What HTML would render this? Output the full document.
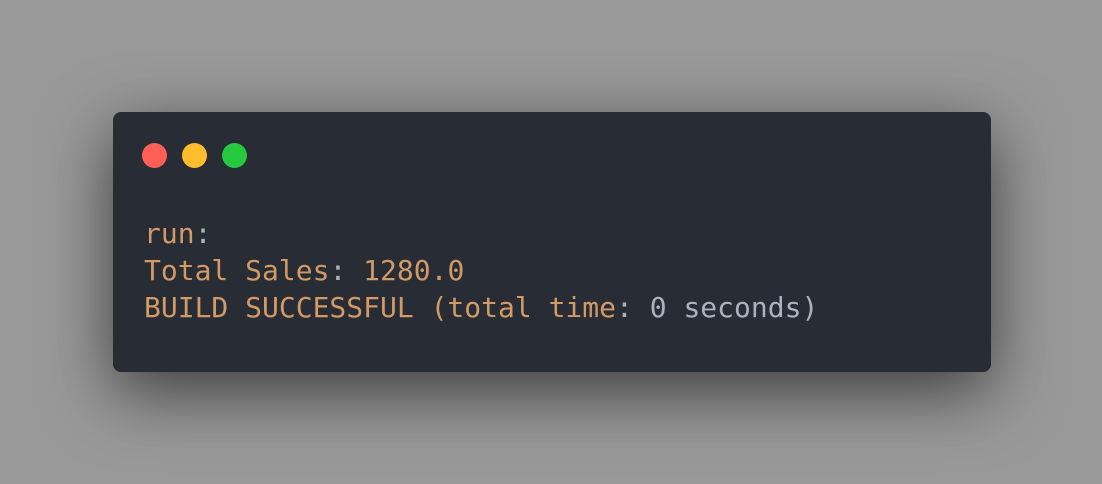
<!DOCTYPE html>
<html><head><style>
html,body{margin:0;padding:0;}
body{width:1102px;height:484px;background:#999;overflow:hidden;position:relative;}
.win{position:absolute;left:113px;top:112px;width:878px;height:260px;background:#282c34;border-radius:8px;box-shadow:0 20px 68px rgba(0,0,0,0.6);}
.dot{position:absolute;top:31px;width:25px;height:25px;border-radius:50%;}
pre{position:absolute;left:31px;top:103px;margin:0;font-family:"DejaVu Sans Mono","Liberation Mono",monospace;font-size:28px;line-height:37px;color:#d19a66;}
.g{color:#abb2bf;}
</style></head><body>
<div class="win">
<div class="dot" style="left:29px;background:#ff5f56"></div>
<div class="dot" style="left:69px;background:#ffbd2e"></div>
<div class="dot" style="left:109px;background:#27c93f"></div>
<pre>run<span class="g">:</span>
Total Sales<span class="g">:</span> 1280.0
BUILD SUCCESSFUL (total time<span class="g">: 0 seconds)</span></pre>
</div>
</body></html>
